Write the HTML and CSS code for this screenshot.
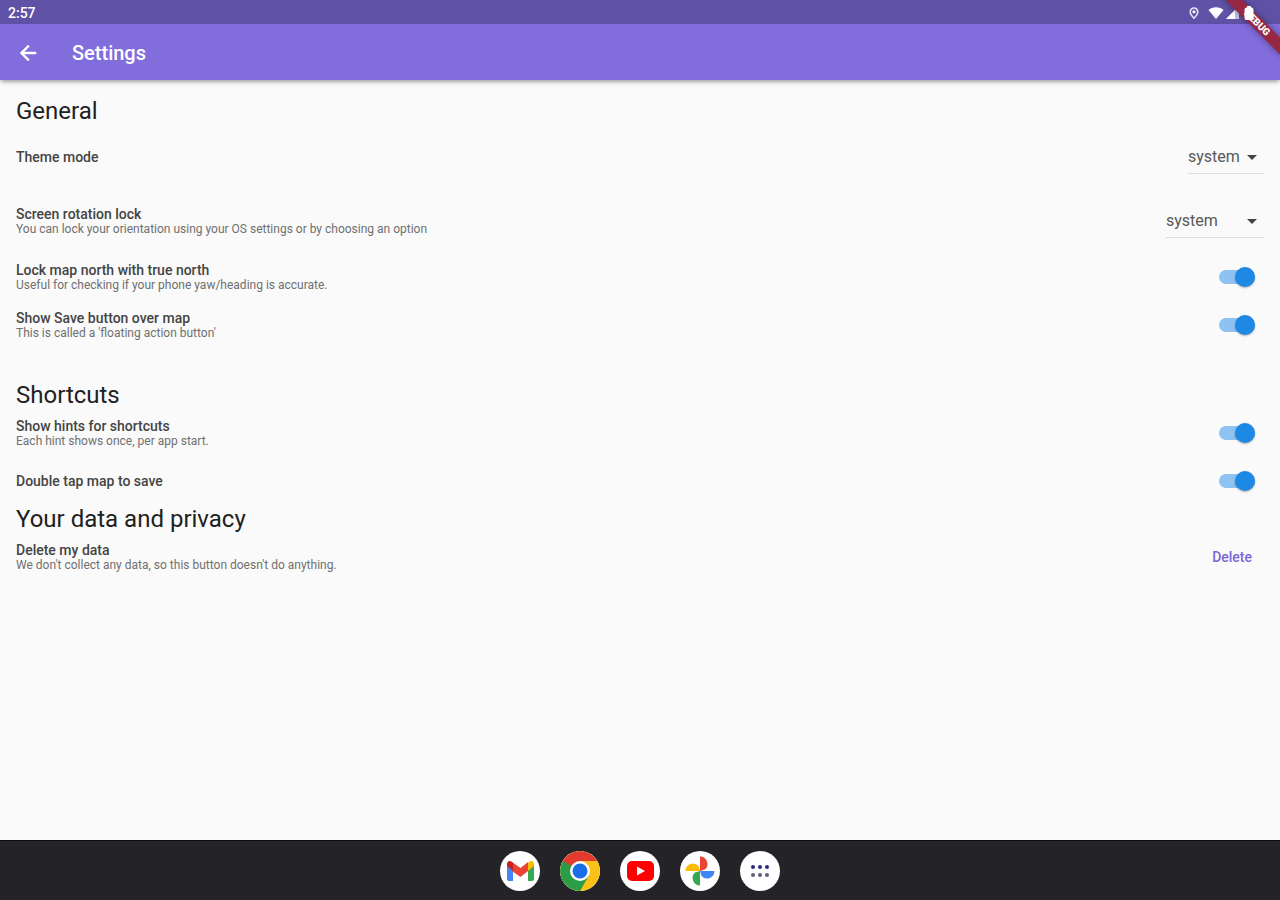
FILE: index.html
```html
<!DOCTYPE html>
<html lang="en">

<head>
    <meta charset="UTF-8">
    <meta name="viewport" content="width=device-width, initial-scale=1.0">
    <title>Settings</title>
    <link rel="stylesheet" href="styles.css">
</head>

<body>
    <div class="status-bar">
        <span class="clock">2:57</span>
        <div class="status-icons">
            <!-- location -->
            <svg class="pin" width="10" height="12" viewBox="0 0 10 12">
                <path d="M5 1a3.800 3.800 0 0 0-3.800 3.800C1.200 7.500 5 11.300 5 11.300s3.800-3.800 3.800-6.500A3.800 3.800 0 0 0 5 1z" fill="none" stroke="#e6e2f5" stroke-width="1.600"/>
                <circle cx="5" cy="4.800" r="1.600" fill="#fff"/>
            </svg>
            <!-- wifi -->
            <svg width="16" height="12" viewBox="0 0 16 12">
                <path d="M8 12L0.500 3C2.500 1.200 5 0.300 8 0.300s5.500 0.900 7.500 2.700z" fill="#fff"/>
            </svg>
            <!-- signal -->
            <svg width="13" height="13" viewBox="0 0 13 13">
                <path d="M0 13L13 0v13z" fill="#c9c2e6"/>
                <path d="M0 13L9 4v9z" fill="#fff"/>
            </svg>
            <!-- battery -->
            <svg class="battery" width="10" height="14" viewBox="0 0 10 14">
                <path d="M3 0h4v1.200q2.500 0.300 2.500 2.300V12q0 2-2 2h-5q-2 0-2-2V3.500q0-2 2.500-2.300z" fill="#fff"/>
            </svg>
        </div>
    </div>
    <div class="banner-corner"><span class="banner">DEBUG</span></div>

    <header class="app-bar">
        <button class="back" type="button" aria-label="Back">
            <svg width="24" height="24" viewBox="0 0 24 24">
                <path d="M20 11H7.830l5.590-5.590L12 4l-8 8 8 8 1.410-1.410L7.830 13H20z" fill="#fff" stroke="#fff" stroke-width="0.500"/>
            </svg>
        </button>
        <h1>Settings</h1>
    </header>

    <main class="settings">
        <section>
            <h2>General</h2>
            <div class="row tall">
                <label class="title" for="theme">Theme mode</label>
                <div class="dropdown">
                    <select id="theme">
                        <option>system</option>
                        <option>light</option>
                        <option>dark</option>
                    </select>
                </div>
            </div>
            <div class="row tall">
                <label for="rotation">
                    <span class="title">Screen rotation lock</span>
                    <span class="subtitle">You can lock your orientation using your OS settings or by choosing an option</span>
                </label>
                <div class="dropdown wide">
                    <select id="rotation">
                        <option>system</option>
                        <option>portrait</option>
                        <option>landscape</option>
                    </select>
                </div>
            </div>
            <div class="row">
                <label for="north">
                    <span class="title">Lock map north with true north</span>
                    <span class="subtitle">Useful for checking if your phone yaw/heading is accurate.</span>
                </label>
                <input class="switch" type="checkbox" id="north" checked>
            </div>
            <div class="row">
                <label for="save-button">
                    <span class="title">Show Save button over map</span>
                    <span class="subtitle">This is called a 'floating action button'</span>
                </label>
                <input class="switch" type="checkbox" id="save-button" checked>
            </div>
        </section>

        <section class="spaced">
            <h2>Shortcuts</h2>
            <div class="row">
                <label for="hints">
                    <span class="title">Show hints for shortcuts</span>
                    <span class="subtitle">Each hint shows once, per app start.</span>
                </label>
                <input class="switch" type="checkbox" id="hints" checked>
            </div>
            <div class="row">
                <label class="title" for="double-tap">Double tap map to save</label>
                <input class="switch" type="checkbox" id="double-tap" checked>
            </div>
        </section>

        <section>
            <h2>Your data and privacy</h2>
            <div class="row">
                <div>
                    <span class="title">Delete my data</span>
                    <span class="subtitle">We don't collect any data, so this button doesn't do anything.</span>
                </div>
                <button class="text-button" type="button">Delete</button>
            </div>
        </section>
    </main>

    <nav class="taskbar">
        <a href="#" aria-label="Gmail">
            <svg width="40" height="40" viewBox="0 0 40 40">
                <path d="M7 14v14q0 2 2 2h4V17z" fill="#4285f4"/>
                <path d="M28 17v13h4q2 0 2-2V14z" fill="#34a853"/>
                <path d="M28 12v8l6-5v-2c0-3-3-4-5-2z" fill="#fbbc04"/>
                <path d="M12 11v9l8.500 6 7.500-6v-9l-7.500 6z" fill="#ea4335"/>
                <path d="M7 13v2l6 5v-8l-1-1c-2-2-5-1-5 2z" fill="#c5221f"/>
            </svg>
        </a>
        <a href="#" aria-label="Chrome">
            <svg width="40" height="40" viewBox="0 0 40 40">
                <circle cx="20" cy="20" r="20" fill="#fbc116"/>
                <path d="M20 20L2.700 10A20 20 0 0 0 20 40l8.700-15z" fill="#2a9d47"/>
                <path d="M20 20L11.300 25 2.700 10A20 20 0 0 1 37.300 10H20z" fill="#e33b2e"/>
                <path d="M2.700 10L11.300 25 20 20z" fill="#2a9d47"/>
                <circle cx="20" cy="20" r="10" fill="#fff"/>
                <circle cx="20" cy="20" r="7.500" fill="#1a6fe8"/>
            </svg>
        </a>
        <a href="#" aria-label="YouTube">
            <svg width="40" height="40" viewBox="0 0 40 40">
                <rect x="7" y="10" width="27" height="20" rx="5" fill="#f00"/>
                <path d="M17 15.500v9l8-4.500z" fill="#fff"/>
            </svg>
        </a>
        <a href="#" aria-label="Photos">
            <svg width="40" height="40" viewBox="0 0 40 40">
                <path d="M20 5.500a7.500 7.500 0 0 1 5 13L20 20z" fill="#ea4335"/>
                <path d="M34.500 20a7.500 7.500 0 0 1-13 5L20 20z" fill="#4285f4"/>
                <path d="M20 34.500a7.500 7.500 0 0 1-5-13l5-1.500z" fill="#34a853"/>
                <path d="M5.500 20a7.500 7.500 0 0 1 13-5l1.500 5z" fill="#fbbc04"/>
            </svg>
        </a>
        <a href="#" aria-label="All apps">
            <svg width="40" height="40" viewBox="0 0 40 40">
                <g fill="#2b2a78">
                    <circle cx="13" cy="16" r="2"/>
                    <circle cx="20" cy="16" r="2"/>
                    <circle cx="27" cy="16" r="2"/>
                </g>
                <g fill="#5d6076">
                    <circle cx="13" cy="24" r="2"/>
                    <circle cx="20" cy="24" r="2"/>
                    <circle cx="27" cy="24" r="2"/>
                </g>
            </svg>
        </a>
    </nav>
</body>

</html>
```
FILE: styles.css
```css
* {
    box-sizing: border-box;
}

body {
    margin: 0;
    min-height: 100vh;
    display: flex;
    flex-direction: column;
    position: relative;
    font-family: Roboto, "Liberation Sans", sans-serif;
    background-color: #fafafa;
    color: #444;
}

/* status bar */
.status-bar {
    display: flex;
    justify-content: space-between;
    align-items: center;
    height: 24px;
    padding: 1px 26px 0 8px;
    background-color: #5f51a5;
}

.clock {
    color: #fff;
    font-size: 14px;
    font-weight: 500;
}

.status-icons {
    display: flex;
    align-items: center;
    gap: 2px;
}

.pin {
    margin-right: 7px;
}

.battery {
    margin-left: 3px;
    position: relative;
    z-index: 2;
}

/* debug ribbon over the top right corner */
.banner-corner {
    position: absolute;
    top: 0;
    right: 0;
    width: 60px;
    height: 60px;
    overflow: hidden;
    pointer-events: none;
}

.banner {
    position: absolute;
    top: 17px;
    right: -17px;
    width: 80px;
    height: 12px;
    background-color: #962843;
    box-shadow: 0 0 6px rgba(0, 0, 0, 0.4);
    color: #fff;
    font-size: 10px;
    font-weight: 900;
    line-height: 12px;
    text-align: center;
    transform: rotate(45deg);
}

/* app bar */
.app-bar {
    display: flex;
    align-items: center;
    height: 56px;
    padding: 2px 16px 0;
    gap: 32px;
    background-color: #816ddc;
    box-shadow: 0 3px 4px -1px rgba(0, 0, 0, 0.35);
}

.back {
    display: flex;
    padding: 0;
    border: none;
    background: none;
    cursor: pointer;
}

h1 {
    margin: 0;
    font-size: 20px;
    font-weight: 500;
    color: #fff;
}

/* settings list */
.settings {
    flex: 1;
    padding: 17px 16px 16px;
}

.spaced {
    margin-top: 32px;
}

h2 {
    margin: 0;
    font-size: 24px;
    font-weight: 400;
    line-height: 28px;
    color: #212121;
}

.row {
    display: flex;
    justify-content: space-between;
    align-items: center;
    min-height: 48px;
}

.row.tall {
    min-height: 64px;
}

.title,
.subtitle {
    display: block;
}

.title {
    font-size: 14px;
    font-weight: 500;
    line-height: 16px;
}

.subtitle {
    font-size: 12px;
    line-height: 14px;
    color: #707070;
}

/* dropdowns */
.dropdown {
    position: relative;
    width: 76px;
    border-bottom: 1px solid #dcdcdc;
}

.dropdown.wide {
    width: 98px;
}

.dropdown::after {
    content: "";
    position: absolute;
    top: 14px;
    right: 7px;
    border: 5px solid transparent;
    border-top-color: #444;
    border-bottom: none;
    pointer-events: none;
}

.dropdown select {
    appearance: none;
    width: 100%;
    height: 32px;
    padding: 0;
    border: none;
    background: none;
    font: inherit;
    font-size: 16px;
    color: #585858;
}

/* switches */
.switch {
    appearance: none;
    display: flex;
    align-items: center;
    width: 36px;
    height: 14px;
    margin: 0 9px;
    border-radius: 7px;
    background-color: #bdbdbd;
    cursor: pointer;
}

.switch::before {
    content: "";
    width: 20px;
    height: 20px;
    border-radius: 50%;
    background-color: #fff;
    box-shadow: 0 1px 2px rgba(0, 0, 0, 0.3);
}

.switch:checked {
    justify-content: flex-end;
    background-color: #8ec2f2;
}

.switch:checked::before {
    background-color: #1e88e5;
}

.text-button {
    padding: 8px 12px;
    border: none;
    background: none;
    font: inherit;
    font-size: 14px;
    font-weight: 500;
    color: #7a66d8;
    cursor: pointer;
}

/* taskbar */
.taskbar {
    display: flex;
    justify-content: center;
    align-items: center;
    gap: 20px;
    height: 60px;
    background-color: #242428;
    border-top: 1px solid #0c0c0e;
}

.taskbar a {
    display: flex;
    width: 40px;
    height: 40px;
    border-radius: 50%;
    background-color: #fff;
    overflow: hidden;
}
```
